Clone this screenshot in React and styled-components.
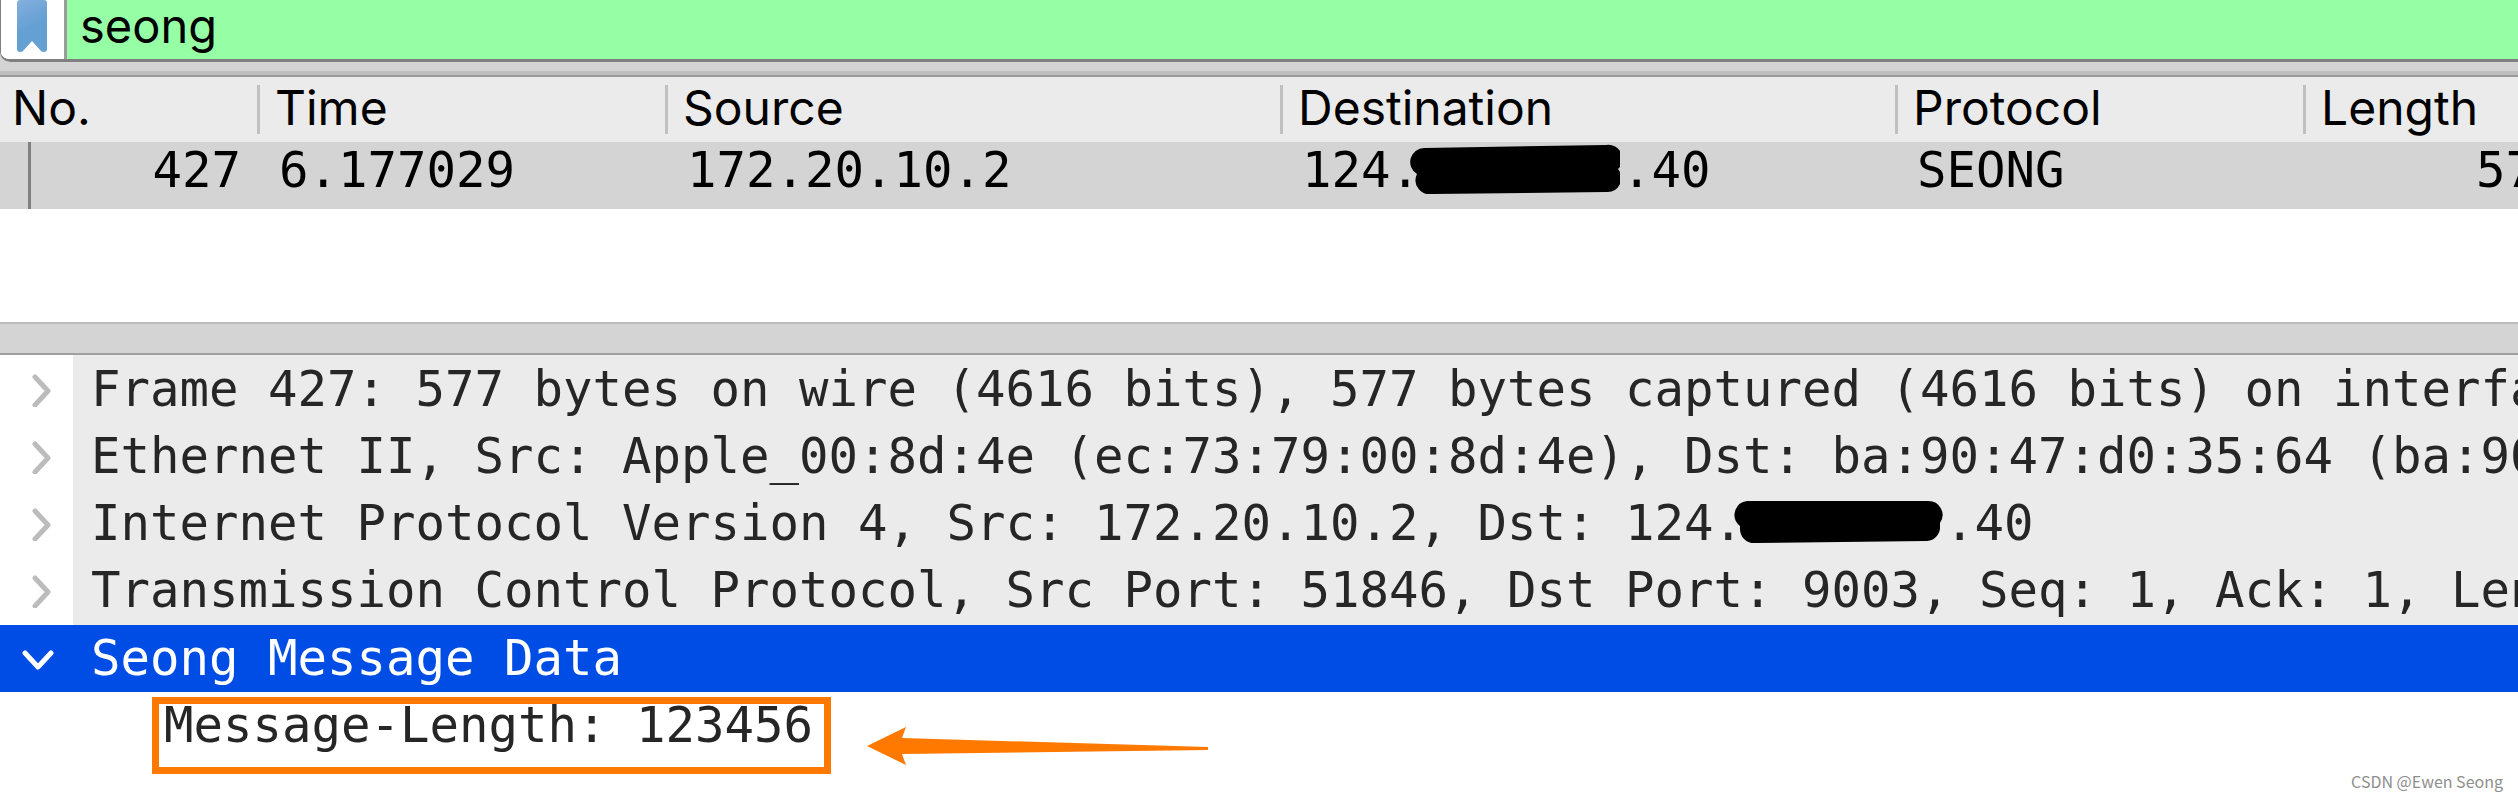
import { useState } from "react";
import styled, { createGlobalStyle } from "styled-components";

const columns = ["No.", "Time", "Source", "Destination", "Protocol", "Length"];

const layers = [
  {
    text: "Frame 427: 577 bytes on wire (4616 bits), 577 bytes captured (4616 bits) on interfa",
  },
  {
    text: "Ethernet II, Src: Apple_00:8d:4e (ec:73:79:00:8d:4e), Dst: ba:90:47:d0:35:64 (ba:90",
  },
  {
    text: "Internet Protocol Version 4, Src: 172.20.10.2, Dst: 124.",
    masked: true,
    tail: ".40",
  },
  {
    text: "Transmission Control Protocol, Src Port: 51846, Dst Port: 9003, Seq: 1, Ack: 1, Len",
  },
];

const Marker = ({ flat }) => (
  <MarkerSlot>
    <MarkerDrawing viewBox="0 0 210 50" $flat={flat} aria-hidden="true">
      {flat ? (
        <path d="M14 1H195A14 14 0 0 1 207 23V26A14 14 0 0 1 194 41L22 43A14 14 0 0 1 7 28V26A14 14 0 0 1 14 1Z" />
      ) : (
        <path d="M14 4L196 1A14 14 0 0 1 208 25A14 14 0 0 1 196 48L22 50A14 14 0 0 1 7 30A14 14 0 0 1 14 4Z" />
      )}
    </MarkerDrawing>
  </MarkerSlot>
);

const Chevron = ({ open }) => (
  <svg width="34" height="34" viewBox="0 0 34 34" fill="none" aria-hidden="true">
    <path
      d={open ? "M5 11L18 25L31 11" : "M15 4L28 18L15 32"}
      stroke={open ? "#fff" : "#bcbcbc"}
      strokeWidth="5"
      strokeLinecap="round"
      strokeLinejoin="round"
    />
  </svg>
);

const App = () => {
  const [filter, setFilter] = useState("seong");

  return (
    <Window>
      <GlobalStyle />
      <FilterBar>
        <BookmarkButton aria-label="Saved filters">
          <svg width="30" height="52" viewBox="0 0 30 52" aria-hidden="true">
            <defs>
              <linearGradient id="ribbon" x1="0" y1="0" x2="0.3" y2="1">
                <stop offset="0" stopColor="#85b0de" />
                <stop offset="0.6" stopColor="#64a0d2" />
              </linearGradient>
            </defs>
            <path
              d="M0 3Q0 0 3 0H27Q30 0 30 3V49Q30 52 27 52Q25 52 24 51L15 41L6 51Q5 52 3 52Q0 52 0 49Z"
              fill="url(#ribbon)"
            />
          </svg>
        </BookmarkButton>
        <FilterInput
          aria-label="Display filter"
          value={filter}
          onChange={(e) => setFilter(e.target.value)}
        />
      </FilterBar>
      <ToolbarEdge />

      <PacketPane>
        <PacketTable>
          <colgroup>
            <NoCol />
            <TimeCol />
            <AddressCol />
            <AddressCol />
            <TimeCol />
            <LengthCol />
          </colgroup>
          <thead>
            <tr>
              {columns.map((name) => (
                <HeaderCell key={name} scope="col">
                  <HeaderLabel>{name}</HeaderLabel>
                </HeaderCell>
              ))}
            </tr>
          </thead>
          <tbody>
            <PacketRow>
              <FirstCell>427</FirstCell>
              <Cell>6.177029</Cell>
              <Cell>172.20.10.2</Cell>
              <Cell>
                124.
                <Marker />
                .40
              </Cell>
              <Cell>SEONG</Cell>
              <LengthCell>57</LengthCell>
            </PacketRow>
          </tbody>
        </PacketTable>
      </PacketPane>

      <Splitter />

      <DetailPane>
        <LayerGroup>
          {layers.map((layer) => (
            <LayerRow key={layer.text}>
              <Expander aria-label="Expand">
                <Chevron />
              </Expander>
              <LayerText>
                {layer.text}
                {layer.masked && <Marker flat />}
                {layer.tail}
              </LayerText>
            </LayerRow>
          ))}
        </LayerGroup>
        <SelectedRow>
          <Expander aria-label="Collapse">
            <Chevron open />
          </Expander>
          <LayerText $selected>Seong Message Data</LayerText>
        </SelectedRow>
        <FieldRow>
          <FieldText>
            Message-Length: 123456
            <Highlight />
          </FieldText>
          <Arrow viewBox="0 0 342 38" aria-hidden="true">
            <path d="M0 19L39 0L35 11L341 20V23L35 27L39 38Z" fill="#ff7800" />
          </Arrow>
        </FieldRow>
      </DetailPane>

      <Credit>CSDN @Ewen Seong</Credit>
    </Window>
  );
};

export default App;

const GlobalStyle = createGlobalStyle`
  * {
    box-sizing: border-box;
  }
  body {
    margin: 0;
    background: #fff;
    overflow: hidden;
  }
  button,
  input {
    font: inherit;
    border: 0;
    padding: 0;
  }
`;

const mono = `"DejaVu Sans Mono", Menlo, monospace`;
const sans = `Inter, "Liberation Sans", sans-serif`;

const Window = styled.main`
  position: relative;
  display: flex;
  flex-direction: column;
  min-height: 100vh;
  overflow: hidden;
  background: #fff;
  font-family: ${mono};
  font-size: 49px;
  line-height: 67px;
  color: #262626;
`;

const FilterBar = styled.div`
  display: flex;
  height: 62px;
  border-left: 1px solid #808080;
  border-bottom: 3px solid #808080;
  border-bottom-left-radius: 10px;
  box-shadow: -10px 10px 0 #d4d4d4;
  overflow: hidden;
`;

const BookmarkButton = styled.button`
  display: flex;
  justify-content: center;
  width: 66px;
  padding-right: 2px;
  background: #fff;
  border-right: 3px solid #9a9ca0;
`;

const FilterInput = styled.input`
  flex: 1;
  min-width: 0;
  padding: 0 0 8px 13px;
  background: #96ffa5;
  color: #000;
  font-family: ${sans};
  font-size: 47px;
  outline: none;
`;

const ToolbarEdge = styled.div`
  height: 15px;
  background: #d4d4d4;
  border-bottom: 2px solid #999;
  box-shadow: inset 0 -4px 0 #bfbfbf;
`;

const PacketPane = styled.section`
  height: 245px;
  overflow: hidden;
`;

const PacketTable = styled.table`
  width: 100%;
  table-layout: fixed;
  border-collapse: collapse;
  color: #000;
`;

const NoCol = styled.col`
  width: 260px;
`;

const TimeCol = styled.col`
  width: 408px;
`;

const AddressCol = styled.col`
  width: 615px;
`;

const LengthCol = styled.col`
  width: auto;
`;

const HeaderCell = styled.th`
  height: 65px;
  padding: 0;
  background: #ebebeb;
  font-family: ${sans};
  font-size: 48px;
  font-weight: 400;
  text-align: left;
`;

const HeaderLabel = styled.div`
  height: 49px;
  padding-left: 15px;
  border-right: 3px solid #c0c0c0;
  line-height: 45px;

  th:first-child > & {
    padding-left: 12px;
  }

  th:last-child > & {
    border-right: 0;
  }
`;

const PacketRow = styled.tr`
  height: 67px;
  background: #d4d4d4;
`;

const Cell = styled.td`
  padding: 0 0 10px 19px;
  line-height: 57px;
  white-space: nowrap;
`;

const FirstCell = styled(Cell)`
  padding-right: 19px;
  text-align: right;
  background: linear-gradient(#808080, #808080) 28px 0 / 3px 100% no-repeat;
`;

const LengthCell = styled(Cell)`
  padding-left: 170px;
`;

const MarkerSlot = styled.span`
  position: relative;
  display: inline-block;
  width: 202px;
  height: 1px;
`;

const MarkerDrawing = styled.svg`
  position: absolute;
  left: -10px;
  bottom: ${({ $flat }) => ($flat ? "-10px" : "-7px")};
  width: 210px;
  height: 50px;
`;

const Splitter = styled.div`
  height: 33px;
  background: #d4d4d4;
  border-top: 2px solid #bbb;
  border-bottom: 2px solid #9f9f9f;
`;

const DetailPane = styled.section`
  padding-bottom: 24px;
  overflow: hidden;
`;

const LayerGroup = styled.div`
  padding: 1px 0;
  background: linear-gradient(90deg, #fff 73px, #ebebeb 73px);
`;

const LayerRow = styled.div`
  display: flex;
  align-items: center;
  height: 67px;
`;

const SelectedRow = styled(LayerRow)`
  background: #004de6;
`;

const Expander = styled.button`
  display: flex;
  flex: none;
  align-items: center;
  justify-content: center;
  width: 73px;
  height: 67px;
  background: none;
`;

const LayerText = styled.span`
  padding-left: 18px;
  white-space: nowrap;
  color: ${({ $selected }) => ($selected ? "#fff" : "#262626")};
`;

const FieldRow = styled.div`
  display: flex;
  align-items: flex-start;
  gap: 54px;
  padding-left: 164px;
`;

const FieldText = styled.span`
  position: relative;
  white-space: nowrap;
`;

const Highlight = styled.span`
  position: absolute;
  inset: 5px -18px -15px -12px;
  border: 7px solid #ff7800;
`;

const Arrow = styled.svg`
  flex: none;
  align-self: flex-end;
  width: 342px;
  height: 38px;
  margin-bottom: -6px;
`;

const Credit = styled.small`
  position: absolute;
  right: 15px;
  bottom: 8px;
  font-family: "Noto Sans CJK SC", "Noto Sans", sans-serif;
  font-size: 16px;
  line-height: 22px;
  color: #8e8e8e;
`;
